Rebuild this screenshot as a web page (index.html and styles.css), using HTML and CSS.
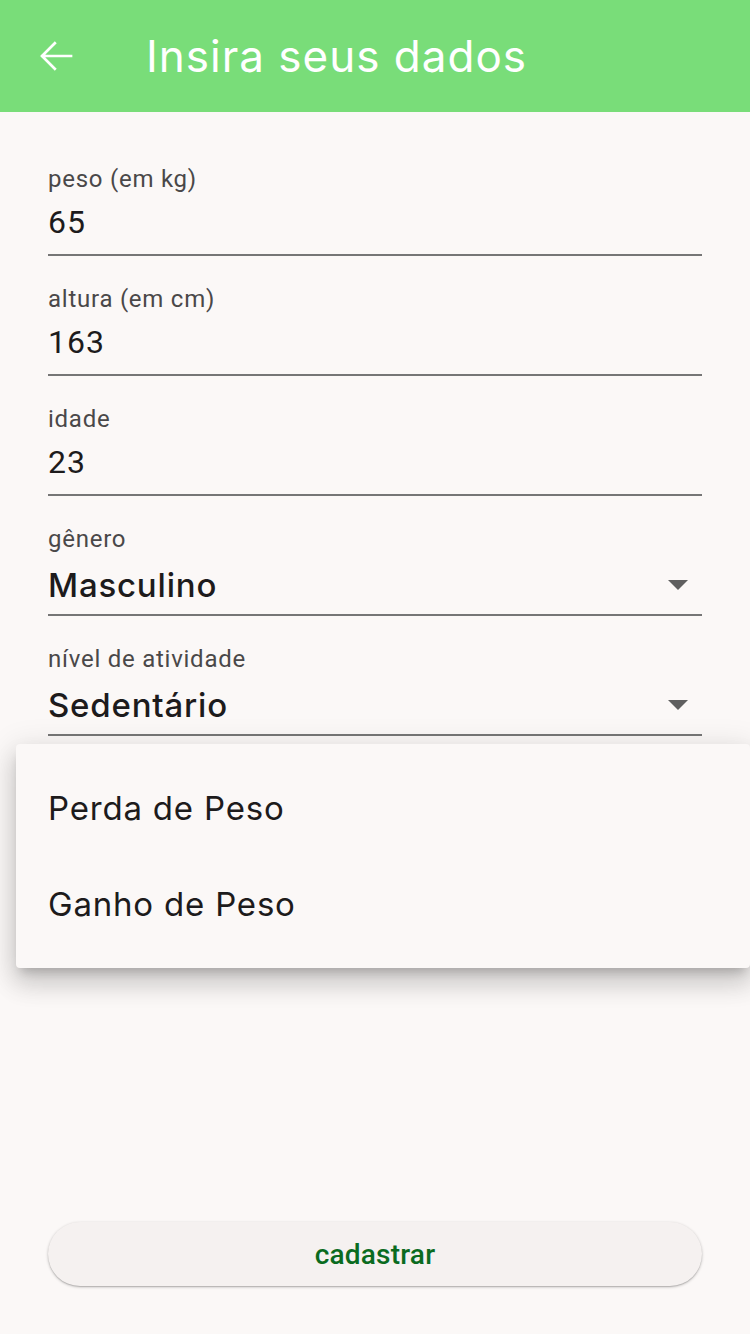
FILE: index.html
```html
<!DOCTYPE html>
<html lang="pt">
<head>
<meta charset="utf-8">
<title>Insira seus dados</title>
<link rel="stylesheet" href="styles.css">
</head>
<body>
<div class="screen">
  <header class="appbar">
    <button class="back" aria-label="Voltar">
      <svg viewBox="0 0 24 24" width="48" height="48"><path d="M19.5 12H5.2M11.4 5.6 5 12l6.4 6.4" fill="none" stroke="#fff" stroke-width="1.35" stroke-linecap="square"/></svg>
    </button>
    <h1 class="title">Insira seus dados</h1>
  </header>
  <main class="form">
    <div class="field">
      <div class="label">peso (em kg)</div>
      <div class="value">65</div>
    </div>
    <div class="field">
      <div class="label">altura (em cm)</div>
      <div class="value">163</div>
    </div>
    <div class="field">
      <div class="label">idade</div>
      <div class="value">23</div>
    </div>
    <div class="field">
      <div class="label">gênero</div>
      <div class="select">
        <span class="select-text">Masculino</span>
        <svg class="caret" viewBox="0 0 24 24" width="48" height="48"><path d="M7 10l5 5 5-5z" fill="#5f5f5f"/></svg>
      </div>
    </div>
    <div class="field">
      <div class="label">nível de atividade</div>
      <div class="select">
        <span class="select-text">Sedentário</span>
        <svg class="caret" viewBox="0 0 24 24" width="48" height="48"><path d="M7 10l5 5 5-5z" fill="#5f5f5f"/></svg>
      </div>
    </div>
    <div class="spacer"></div>
    <button class="submit">cadastrar</button>
  </main>
  <div class="menu">
    <div class="menu-item">Perda de Peso</div>
    <div class="menu-item">Ganho de Peso</div>
  </div>
</div>
</body>
</html>
```
FILE: styles.css
```css
* { box-sizing: border-box; }
html, body { margin: 0; padding: 0; }
body {
  background: #fbf8f7;
  font-family: Roboto, "Liberation Sans", sans-serif;
}
.screen {
  position: relative;
  width: 750px;
  height: 1334px;
  display: flex;
  flex-direction: column;
  overflow: hidden;
}
.appbar {
  height: 112px;
  flex: none;
  background: #79dd79;
  display: flex;
  align-items: center;
  padding-left: 32px;
}
.back {
  width: 48px;
  height: 48px;
  padding: 0;
  border: 0;
  background: none;
  display: flex;
}
.title {
  margin: 0 0 0 66px;
  font-family: Inter, "Open Sans", sans-serif;
  font-weight: 400;
  font-size: 44px;
  color: #fff;
  letter-spacing: 1px;
}
.form {
  flex: 1;
  display: flex;
  flex-direction: column;
  padding: 51px 48px 48px;
  gap: 27px;
}
.field {
  border-bottom: 2px solid #767676;
  display: flex;
  flex-direction: column;
}
.label {
  font-size: 24px;
  line-height: 32px;
  letter-spacing: 0.75px;
  color: #4a4849;
}
.value {
  margin-top: 7px;
  font-size: 32px;
  line-height: 40px;
  letter-spacing: 1px;
  color: #1d1b1c;
  padding-bottom: 12px;
}
.select {
  margin-top: 7px;
  height: 52px;
  display: flex;
  align-items: flex-start;
  justify-content: space-between;
}
.select-text {
  font-family: Inter, "Open Sans", sans-serif;
  font-size: 33px;
  line-height: 46px;
  font-weight: 450;
  letter-spacing: 0.8px;
  color: #1d1b1c;
}
.caret { margin-top: -2px; }
.spacer { flex: 1; }
.submit {
  height: 64px;
  border: 0;
  border-radius: 32px;
  background: #f5f1f0;
  box-shadow: 0 1px 3px rgba(0,0,0,0.25), 0 1px 1px rgba(0,0,0,0.12);
  font-family: Roboto, sans-serif;
  font-size: 28px;
  font-weight: 500;
  letter-spacing: 0.2px;
  color: #0a6b1f;
}
.menu {
  position: absolute;
  top: 744px;
  left: 16px;
  right: 0;
  height: 224px;
  background: #fbf8f7;
  border-radius: 4px;
  padding: 16px 0;
  box-shadow: 0 8px 10px -5px rgba(0,0,0,0.2), 0 16px 24px 2px rgba(0,0,0,0.12), 0 6px 30px 5px rgba(0,0,0,0.1);
}
.menu-item {
  height: 96px;
  padding-left: 32px;
  display: flex;
  align-items: center;
  font-family: Inter, "Open Sans", sans-serif;
  font-size: 33px;
  font-weight: 400;
  letter-spacing: 0.8px;
  color: #1d1b1c;
}
```
